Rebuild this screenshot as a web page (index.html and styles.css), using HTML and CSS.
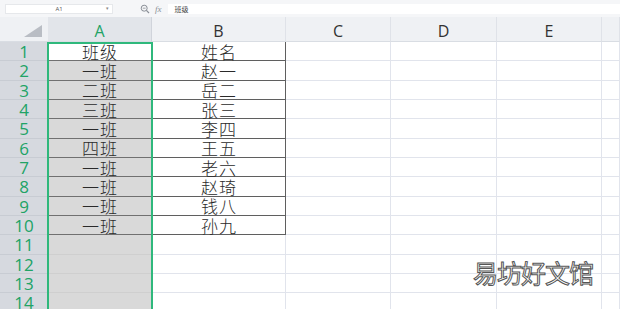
FILE: index.html
```html
<!DOCTYPE html>
<html lang="zh-CN">
  <head>
    <meta charset="UTF-8" />
    <title>班级表</title>
    <link rel="stylesheet" href="styles.css">
  </head>
  <body>
    <div class="toolbar">
      <div class="name-box"><span>A1</span><i class="caret">▾</i></div>
      <svg class="zoom-icon" width="10" height="10" viewBox="0 0 10 10">
        <circle cx="4.2" cy="4.2" r="3" fill="none" stroke="#8a8f97" stroke-width="1"/>
        <line x1="6.4" y1="6.4" x2="9" y2="9" stroke="#8a8f97" stroke-width="1.2"/>
        <line x1="2.8" y1="4.2" x2="5.6" y2="4.2" stroke="#8a8f97" stroke-width="0.8"/>
      </svg>
      <span class="fx">fx</span>
      <div class="formula"><span>班级</span></div>
    </div>

    <div class="sheet">
      <div class="grid" id="grid">
        <div class="corner"><span class="tri"></span></div>
        <div class="col-head active">A</div>
        <div class="col-head">B</div>
        <div class="col-head">C</div>
        <div class="col-head">D</div>
        <div class="col-head">E</div>
        <div class="col-head"></div>
      </div>
      <div class="selection"></div>
      <div class="watermark">易坊好文馆</div>
    </div>

    <script>
      const rows = [
        ["班级", "姓名"],
        ["一班", "赵一"],
        ["二班", "岳二"],
        ["三班", "张三"],
        ["一班", "李四"],
        ["四班", "王五"],
        ["一班", "老六"],
        ["一班", "赵琦"],
        ["一班", "钱八"],
        ["一班", "孙九"]
      ];
      const grid = document.getElementById("grid");
      let html = "";
      for (let r = 0; r < 14; r++) {
        const data = rows[r];
        html += '<div class="row-head">' + (r + 1) + "</div>";
        let aCls = "cell col-a";
        let bCls = "cell";
        if (data) {
          aCls += " data";
          bCls += " data";
          if (r === 0) aCls += " current";
        }
        html += '<div class="' + aCls + '">' + (data ? data[0] : "") + "</div>";
        html += '<div class="' + bCls + '">' + (data ? data[1] : "") + "</div>";
        html += '<div class="cell"></div><div class="cell"></div><div class="cell"></div><div class="cell"></div>';
      }
      grid.insertAdjacentHTML("beforeend", html);
    </script>
  </body>
</html>
```

FILE: styles.css
```css
body {
  margin: 0;
  font-family: "Open Sans", "Noto Sans CJK SC", sans-serif;
  background: #ffffff;
  overflow: hidden;
}

/* formula bar */
.toolbar {
  height: 16px;
  background: #f5f6f8;
  display: flex;
  align-items: center;
  padding-top: 1px;
}
.name-box {
  margin-left: 5px;
  width: 108px;
  height: 10px;
  background: #fff;
  border: 1px solid #e6e8eb;
  box-sizing: border-box;
  display: flex;
  align-items: center;
  justify-content: center;
  position: relative;
  font-size: 6px;
  line-height: 1;
  color: #555;
}
.caret {
  position: absolute;
  right: 3px;
  top: 1px;
  font-style: normal;
  font-size: 5px;
  color: #888;
}
.zoom-icon {
  margin-left: 27px;
}
.fx {
  margin-left: 5px;
  font-family: "Liberation Serif", serif;
  font-style: italic;
  font-size: 9px;
  line-height: 1;
  color: #8a8f97;
}
.formula {
  margin-left: 6px;
  flex: 1;
  height: 10px;
  background: #fff;
  display: flex;
  align-items: center;
  padding-left: 7px;
  font-family: "Noto Sans CJK SC", sans-serif;
  font-size: 7px;
  line-height: 1;
  color: #444;
}

/* sheet */
.sheet {
  position: relative;
}
.grid {
  display: grid;
  grid-template-columns: 48px 104px 134px 105px 106px 105px 1fr;
  grid-template-rows: 25px;
  grid-auto-rows: 19.33px;
}
.corner {
  background: #eff1f4;
  border-bottom: 1px solid #d9dde3;
  position: relative;
}
.tri {
  position: absolute;
  left: 24px;
  top: 8px;
  width: 0;
  height: 0;
  border-left: 18px solid transparent;
  border-bottom: 12px solid #b9bdc4;
}
.col-head {
  background: #eff1f4;
  border-right: 1px solid #dfe2e8;
  border-bottom: 1px solid #d9dde3;
  display: flex;
  align-items: center;
  justify-content: center;
  font-size: 16px;
  line-height: 1;
  color: #333;
  padding-top: 3px;
}
.col-head.active {
  background: #e2e5ea;
  color: #21a366;
  border-right-color: #d0d4db;
}
.row-head {
  background: #d6d9df;
  border-bottom: 1px solid #c8ccd3;
  box-sizing: border-box;
  display: flex;
  align-items: center;
  justify-content: center;
  font-size: 17px;
  line-height: 1;
  color: #21a366;
  padding-top: 1px;
}
.cell {
  border-right: 1px solid #e1e4ec;
  border-bottom: 1px solid #e1e4ec;
  box-sizing: border-box;
  display: flex;
  align-items: center;
  justify-content: center;
  font-family: "Noto Sans CJK SC", sans-serif;
  font-weight: 300;
  font-size: 17px;
  line-height: 1;
  letter-spacing: 1px;
  padding-left: 1px;
  color: #2a2a2a;
}
.cell.col-a {
  background: #d9d9d9;
  border-bottom-color: #cfcfcf;
}
.cell.data {
  border-right-color: #5f5f5f;
  border-bottom-color: #5f5f5f;
}
.cell.col-a.data {
  border-bottom-color: #707070;
}
.cell.current {
  background: #ffffff;
}

.selection {
  position: absolute;
  left: 47px;
  top: 25px;
  width: 106px;
  height: 300px;
  border-left: 2px solid #2fb87c;
  border-right: 2px solid #2fb87c;
  border-top: 2px solid #2fb87c;
  box-sizing: border-box;
  pointer-events: none;
}

.watermark {
  position: absolute;
  left: 473px;
  top: 240px;
  font-family: "Noto Sans CJK SC", sans-serif;
  font-size: 25px;
  line-height: 1.2;
  color: #ffffff;
  -webkit-text-stroke: 1px #555;
  letter-spacing: -1px;
}
```
